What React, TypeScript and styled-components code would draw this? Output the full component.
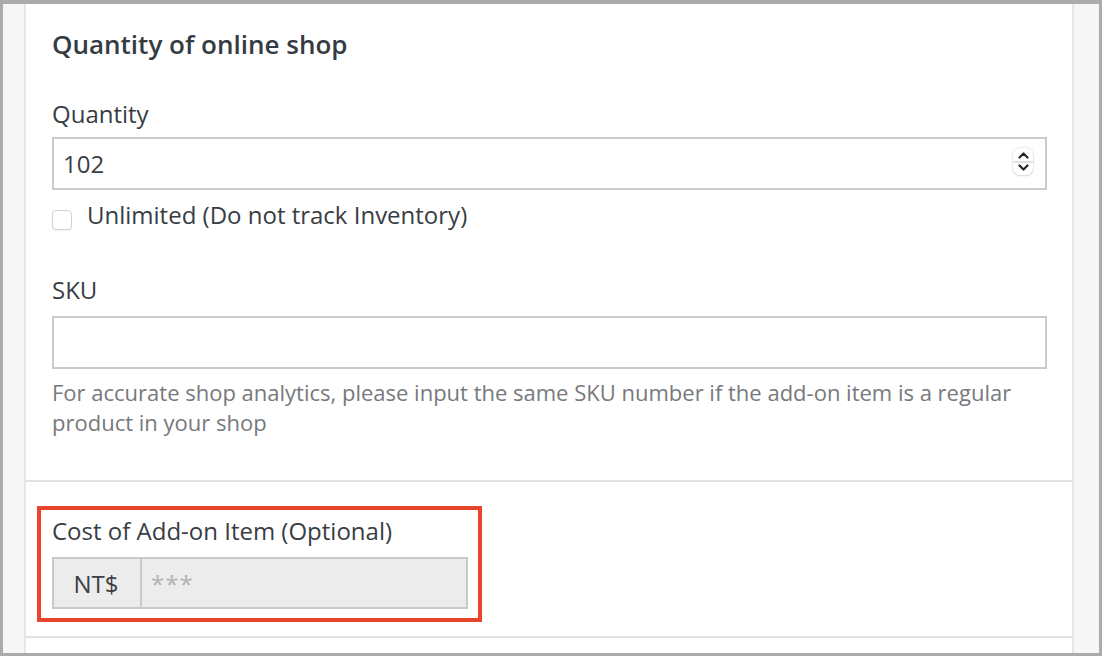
import React from "react";
import styled, { createGlobalStyle } from "styled-components";

const Global = createGlobalStyle`
  html, body { margin: 0; padding: 0; background: #ffffff; }
  body { font-family: "Open Sans", "Liberation Sans", sans-serif; }
  * { box-sizing: border-box; }
`;

const Frame = styled.div`
  width: 1102px;
  height: 656px;
  border-style: solid;
  border-color: #ababab;
  border-width: 4px 3px 3px 3px;
  background: #f6f6f6;
  display: flex;
  padding: 0 25px 0 21px;
  overflow: hidden;
`;

const Panel = styled.div`
  flex: 1;
  background: #ffffff;
  border-left: 2px solid #e6e6e6;
  border-right: 2px solid #e6e6e6;
  display: flex;
  flex-direction: column;
`;

const Section = styled.div<{ $pad: string }>`
  padding: ${(p) => p.$pad};
  border-bottom: 2px solid #e1e1e1;
  display: flex;
  flex-direction: column;
`;

const Heading = styled.h2`
  margin: 0;
  font-size: 26px;
  line-height: 36px;
  font-weight: 600;
  color: #353b43;
`;

const Label = styled.label<{ $mt?: number }>`
  display: block;
  margin-top: ${(p) => p.$mt ?? 0}px;
  font-size: 24px;
  line-height: 32px;
  color: #383d44;
`;

const InputWrap = styled.div<{ $mt: number }>`
  position: relative;
  margin-top: ${(p) => p.$mt}px;
`;

const TextInput = styled.input<{ $h: number }>`
  display: block;
  width: 100%;
  height: ${(p) => p.$h}px;
  border: 2px solid #cbcbcb;
  border-radius: 0;
  padding: 0 9px;
  font-family: "Open Sans", "Liberation Sans", sans-serif;
  font-size: 24px;
  color: #3a3f45;
  background: #fff;
  outline: none;
  -moz-appearance: textfield;
  &::-webkit-outer-spin-button,
  &::-webkit-inner-spin-button {
    -webkit-appearance: none;
    margin: 0;
  }
`;

const Spinner = styled.div`
  position: absolute;
  right: 14px;
  top: 11px;
  width: 20px;
  height: 27px;
  border-radius: 7px;
  background: #fff;
  box-shadow: 0 0 2px rgba(0, 0, 0, 0.22), 0 1px 2px rgba(0, 0, 0, 0.1);
  display: flex;
  flex-direction: column;
  align-items: center;
  justify-content: space-between;
  padding: 4px 0 4px;
  &::after {
    content: "";
    position: absolute;
    left: 0;
    right: 0;
    top: 13px;
    height: 2px;
    background: #e2e2e2;
  }
`;

const CheckRow = styled.div`
  display: flex;
  align-items: flex-start;
  gap: 15px;
  margin-top: 9px;
`;

const CheckBox = styled.span`
  flex: none;
  width: 20px;
  height: 20px;
  margin-top: 11px;
  border-radius: 4px;
  border: 1px solid #d2d2d2;
  background: #fff;
  box-shadow: 0 1px 1px rgba(0, 0, 0, 0.06);
`;

const CheckText = styled.span`
  font-size: 24px;
  line-height: 32px;
  color: #383d44;
`;

const Help = styled.p`
  margin: 8px 0 0;
  font-size: 22px;
  line-height: 30px;
  color: #77797d;
`;

const Highlight = styled.div`
  align-self: flex-start;
  width: 445px;
  margin-left: -15px;
  border: 4px solid #e8442b;
  padding: 5px 10px 9px 11px;
`;

const Group = styled.div`
  display: flex;
  height: 52px;
  margin-top: 10px;
  border: 2px solid #c9c9c9;
  background: #ececec;
`;

const Addon = styled.div`
  width: 88px;
  display: flex;
  align-items: center;
  justify-content: center;
  padding-right: 2px;
  border-right: 2px solid #c9c9c9;
  font-size: 24px;
  color: #3a3f45;
`;

const Masked = styled.div`
  flex: 1;
  display: flex;
  align-items: center;
  padding: 0 9px;
  font-size: 24px;
  color: #b2b2b2;
  letter-spacing: 1px;
`;

const Chevron = ({ up }: { up?: boolean }) => (
  <svg width="11" height="7" viewBox="0 0 11 7">
    <path
      d={up ? "M1.5 5.5 L5.5 1.5 L9.5 5.5" : "M1.5 1.5 L5.5 5.5 L9.5 1.5"}
      fill="none"
      stroke="#262626"
      strokeWidth="2.2"
      strokeLinecap="round"
      strokeLinejoin="round"
    />
  </svg>
);

export default function App() {
  return (
    <>
      <Global />
      <Frame>
        <Panel>
          <Section $pad="22px 25px 43px 26px">
            <Heading>Quantity of online shop</Heading>
            <Label $mt={36}>Quantity</Label>
            <InputWrap $mt={7}>
              <TextInput type="number" defaultValue={102} $h={53} />
              <Spinner>
                <Chevron up />
                <Chevron />
              </Spinner>
            </InputWrap>
            <CheckRow>
              <CheckBox />
              <CheckText>Unlimited (Do not track Inventory)</CheckText>
            </CheckRow>
            <Label $mt={43}>SKU</Label>
            <InputWrap $mt={10}>
              <TextInput type="text" $h={53} />
            </InputWrap>
            <Help>
              For accurate shop analytics, please input the same SKU number if the add-on item is a regular
              product in your shop
            </Help>
          </Section>
          <Section $pad="24px 25px 14px 26px">
            <Highlight>
              <Label>Cost of Add-on Item (Optional)</Label>
              <Group>
                <Addon>NT$</Addon>
                <Masked>***</Masked>
              </Group>
            </Highlight>
          </Section>
        </Panel>
      </Frame>
    </>
  );
}
